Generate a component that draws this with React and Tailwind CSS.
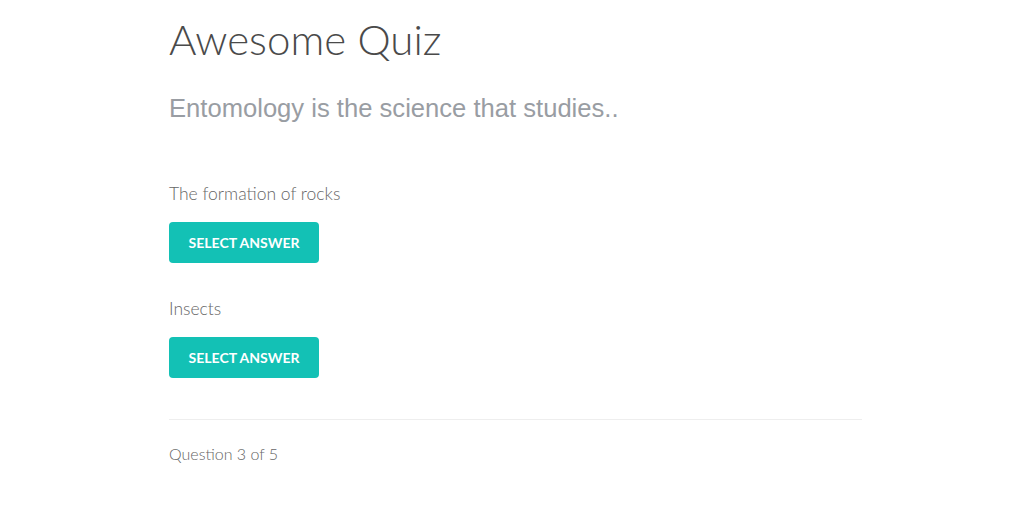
export default function App() {
  return (
    <div className="w-full min-h-[517px] bg-white">
      <div className="w-[693px] mx-auto pt-[12px]">
        <h1 className="text-[42px] leading-[54px] font-light text-[#4a4a4a] font-['Lato',sans-serif]">
          Awesome Quiz
        </h1>
        <h2 className="mt-[27px] text-[25.6px] leading-[30px] text-[#999da3] font-['Liberation_Sans',Arial,sans-serif]">
          Entomology is the science that studies..
        </h2>
        <div className="mt-[60px] flex flex-col">
          <p className="text-[17.5px] leading-[22px] font-light text-[#666666] font-['Lato',sans-serif]">The formation of rocks</p>
          <button className="mt-[17px] w-[150px] h-[41px] rounded-[4px] bg-[#13c1b5] text-white text-[14px] font-bold font-['Lato',sans-serif] uppercase">
            Select Answer
          </button>
          <p className="mt-[35px] text-[17.5px] leading-[22px] font-light text-[#666666] font-['Lato',sans-serif]">Insects</p>
          <button className="mt-[17px] w-[150px] h-[41px] rounded-[4px] bg-[#13c1b5] text-white text-[14px] font-bold font-['Lato',sans-serif] uppercase">
            Select Answer
          </button>
        </div>
        <hr className="mt-[41px] border-t border-[#eeeeee]" />
        <p className="mt-[23px] text-[16px] leading-[22px] font-light text-[#666666] font-['Lato',sans-serif]">Question 3 of 5</p>
      </div>
    </div>
  );
}
